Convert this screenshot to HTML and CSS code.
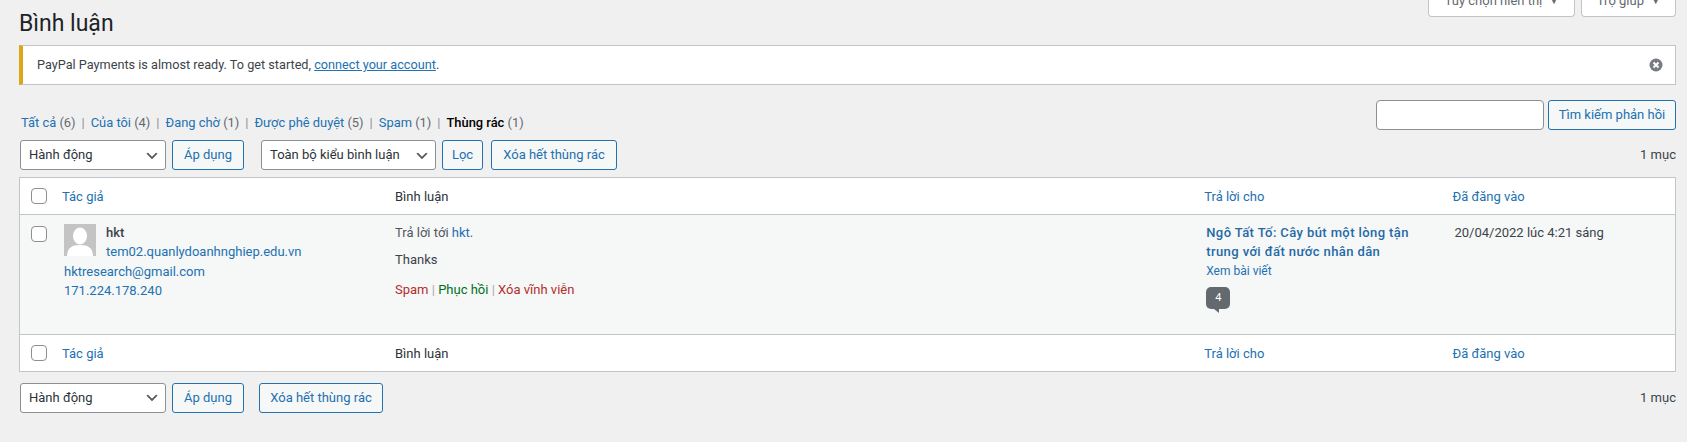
FILE: index.html
```html
<!DOCTYPE html>
<html lang="vi">
<head>
  <meta charset="UTF-8">
  <title>Bình luận</title>
  <link rel="stylesheet" href="styles.css">
</head>
<body>

  <div class="screen-meta">
    <button class="meta-btn">Tuỳ chọn hiển thị <span class="caret">▼</span></button>
    <button class="meta-btn">Trợ giúp <span class="caret">▼</span></button>
  </div>

  <h1 class="page-title">Bình luận</h1>

  <div class="notice">
    <p>PayPal Payments is almost ready. To get started, <a href="#">connect your account</a>.</p>
    <svg class="dismiss" width="14" height="14" viewBox="0 0 14 14">
      <circle cx="7" cy="7" r="6.5" fill="#787c82"/>
      <path d="M4.5 4.5l5 5M9.5 4.5l-5 5" stroke="#fff" stroke-width="2"/>
    </svg>
  </div>

  <div class="filter-row">
    <ul class="subsubsub">
      <li><a href="#">Tất cả</a> <span class="count">(6)</span></li>
      <li><a href="#">Của tôi</a> <span class="count">(4)</span></li>
      <li><a href="#">Đang chờ</a> <span class="count">(1)</span></li>
      <li><a href="#">Được phê duyệt</a> <span class="count">(5)</span></li>
      <li><a href="#">Spam</a> <span class="count">(1)</span></li>
      <li><a href="#" class="current">Thùng rác</a> <span class="count">(1)</span></li>
    </ul>
    <div class="search-box">
      <input type="search" class="search-input">
      <button class="btn">Tìm kiếm phản hồi</button>
    </div>
  </div>

  <div class="tablenav top">
    <select class="sel sel-action"><option>Hành động</option></select>
    <button class="btn btn-apply">Áp dụng</button>
    <select class="sel sel-type"><option>Toàn bộ kiểu bình luận</option></select>
    <button class="btn btn-filter">Lọc</button>
    <button class="btn btn-empty">Xóa hết thùng rác</button>
    <span class="num">1 mục</span>
  </div>

  <table class="comments">
    <thead>
      <tr>
        <th class="col-check"><input type="checkbox" class="cb"></th>
        <th class="col-author"><a href="#">Tác giả</a></th>
        <th>Bình luận</th>
        <th class="col-response"><a href="#">Trả lời cho</a></th>
        <th class="col-date"><a href="#">Đã đăng vào</a></th>
      </tr>
    </thead>
    <tbody>
      <tr>
        <td class="col-check"><input type="checkbox" class="cb"></td>
        <td class="author">
          <svg class="avatar" width="32" height="32" viewBox="0 0 32 32">
            <rect width="32" height="32" fill="#c4c4c4"/>
            <ellipse cx="16" cy="12" rx="7" ry="8.5" fill="#fff"/>
            <path d="M3 32c0-8 5-11 13-11s13 3 13 11z" fill="#fff"/>
          </svg>
          <strong>hkt</strong><br>
          <a href="#">tem02.quanlydoanhnghiep.edu.vn</a><br>
          <a href="#">hktresearch@gmail.com</a><br>
          <a href="#">171.224.178.240</a>
        </td>
        <td class="comment">
          <div class="reply-to">Trả lời tới <a href="#">hkt</a>.</div>
          <p>Thanks</p>
          <div class="row-actions">
            <a href="#" class="red">Spam</a> | <a href="#" class="green">Phục hồi</a> | <a href="#" class="red">Xóa vĩnh viễn</a>
          </div>
        </td>
        <td class="response">
          <a href="#" class="post-title">Ngô Tất Tố: Cây bút một lòng tận trung với đất nước nhân dân</a>
          <a href="#" class="view-post">Xem bài viết</a>
          <span class="bubble">4</span>
        </td>
        <td class="date">20/04/2022 lúc 4:21 sáng</td>
      </tr>
    </tbody>
    <tfoot>
      <tr>
        <th class="col-check"><input type="checkbox" class="cb"></th>
        <th class="col-author"><a href="#">Tác giả</a></th>
        <th>Bình luận</th>
        <th class="col-response"><a href="#">Trả lời cho</a></th>
        <th class="col-date"><a href="#">Đã đăng vào</a></th>
      </tr>
    </tfoot>
  </table>

  <div class="tablenav bottom">
    <select class="sel sel-action"><option>Hành động</option></select>
    <button class="btn btn-apply">Áp dụng</button>
    <button class="btn btn-empty-bottom">Xóa hết thùng rác</button>
    <span class="num">1 mục</span>
  </div>

</body>
</html>
```

FILE: styles.css
```css
html, body {
  overflow: hidden;
}
body {
  font-family: Roboto, "Noto Sans", sans-serif;
  font-size: 13px;
  line-height: 19.5px;
  background: #f0f0f1;
  color: #3c434a;
  margin: 0;
  padding: 0 11px 0 19px;
}
a {
  color: #2271b1;
  text-decoration: none;
}
.screen-meta {
  display: flex;
  justify-content: flex-end;
  gap: 6px;
  height: 17px;
  align-items: flex-end;
}
.meta-btn {
  font: inherit;
  color: #646970;
  background: #fff;
  border: 1px solid #c3c4c7;
  border-top: 0;
  border-radius: 0 0 4px 4px;
  box-sizing: border-box;
  width: 147px;
  height: 30px;
  padding: 0;
  flex: none;
}
.meta-btn + .meta-btn {
  width: 95px;
}
.caret {
  font-size: 9px;
  margin-left: 4px;
  vertical-align: 1px;
}
.page-title {
  font-size: 23px;
  font-weight: 400;
  line-height: 29px;
  color: #1d2327;
  margin: -8px 0 0;
  height: 36px;
}
.notice {
  display: flex;
  align-items: center;
  justify-content: space-between;
  box-sizing: border-box;
  height: 40px;
  background: #fff;
  border: 1px solid #c3c4c7;
  border-left: 4px solid #dba617;
  padding: 0 12px 0 14px;
}
.notice p {
  margin: 0;
  font-size: 12.7px;
}
.notice a {
  text-decoration: underline;
}
.filter-row {
  display: flex;
  justify-content: space-between;
  margin-top: 15px;
  height: 40px;
}
.subsubsub {
  list-style: none;
  display: flex;
  margin: 13px 0 0 2px;
  padding: 0;
  font-size: 12.9px;
  color: #646970;
}
.subsubsub li + li::before {
  content: "|";
  color: #8c8f94;
  margin: 0 6px;
}
.subsubsub .current {
  color: #000;
  font-weight: 500;
}
.search-box {
  display: flex;
  gap: 4px;
  height: 30px;
}
.search-input {
  box-sizing: border-box;
  width: 168px;
  height: 30px;
  background: #fff;
  border: 1px solid #8c8f94;
  border-radius: 4px;
}
.btn {
  font: inherit;
  color: #2271b1;
  background: #f6f7f7;
  border: 1px solid #2271b1;
  border-radius: 3px;
  box-sizing: border-box;
  width: 128px;
  height: 30px;
  padding: 0;
  flex: none;
  white-space: nowrap;
}
.tablenav {
  display: flex;
  align-items: center;
  gap: 6px;
  height: 30px;
  padding-left: 1px;
}
.tablenav.top {
  margin-bottom: 7px;
}
.tablenav.bottom {
  margin-top: 11px;
}
.sel {
  font: inherit;
  color: #2c3338;
  appearance: none;
  box-sizing: border-box;
  height: 30px;
  background: #fff url("data:image/svg+xml,%3Csvg xmlns='http://www.w3.org/2000/svg' width='20' height='20'%3E%3Cpath d='M5 6l5 5 5-5 2 1-7 7-7-7z' fill='%23555'/%3E%3C/svg%3E") no-repeat right 5px top 55%;
  background-size: 16px 16px;
  border: 1px solid #8c8f94;
  border-radius: 3px;
  padding: 0 24px 0 8px;
}
.sel-action {
  width: 146px;
}
.sel-type {
  width: 175px;
  margin-left: 11px;
}
.btn-apply {
  width: 72px;
}
.btn-filter {
  width: 41px;
}
.btn-empty {
  width: 126px;
  margin-left: 2px;
}
.btn-empty-bottom {
  width: 124px;
  margin-left: 9px;
}
.num {
  margin-left: auto;
}
.comments {
  width: 100%;
  table-layout: fixed;
  border-collapse: separate;
  border-spacing: 0;
  background: #fff;
  border: 1px solid #c3c4c7;
}
.comments th {
  box-sizing: border-box;
  font-weight: 400;
  text-align: left;
  height: 35px;
  padding: 9px 10px 7px;
  color: #2c3338;
}
.comments th.col-author {
  padding-left: 8px;
}
.comments thead th {
  border-bottom: 1px solid #c3c4c7;
}
.comments tfoot th {
  border-top: 1px solid #c3c4c7;
}
.comments td {
  vertical-align: top;
  background: #f6f7f7;
  padding: 8px 10px 26px;
}
.col-check {
  width: 34px;
  box-sizing: border-box;
}
.comments .col-check {
  padding: 0 0 0 11px;
  vertical-align: top;
}
.comments thead .col-check,
.comments tfoot .col-check {
  padding-top: 10px;
}
.comments td.col-check {
  padding-top: 11px;
}
.col-author {
  width: 20%;
}
.col-response {
  width: 15%;
}
.col-date {
  width: 14.05%;
}
.cb {
  appearance: none;
  display: block;
  box-sizing: border-box;
  width: 16px;
  height: 16px;
  margin: 0;
  background: #fff;
  border: 1px solid #8c8f94;
  border-radius: 4px;
}
.comments td.author {
  padding-left: 10px;
  white-space: nowrap;
}
.avatar {
  float: left;
  margin: 1px 10px 0 0;
}
.author strong {
  font-weight: 500;
}
.comment .reply-to {
  color: #50575e;
}
.comment p {
  margin: 8px 0 10px;
}
.row-actions {
  color: #a7aaad;
}
.red {
  color: #b32d2e;
}
.green {
  color: #007017;
}
.comments td.response {
  padding: 8px 24px 25px 12px;
}
.comments td.date {
  padding-left: 12px;
}
.post-title {
  display: block;
  font-weight: 500;
  letter-spacing: 0.4px;
  color: #1f6aa6;
}
.view-post {
  display: block;
  font-size: 12px;
}
.bubble {
  position: relative;
  display: block;
  width: 24px;
  height: 22px;
  margin-top: 6px;
  background: #646970;
  border-radius: 5px;
  color: #fff;
  font-size: 11px;
  line-height: 22px;
  text-align: center;
}
.bubble::after {
  content: "";
  position: absolute;
  left: 8px;
  top: 22px;
  border-top: 4px solid #646970;
  border-left: 5px solid transparent;
}
```
